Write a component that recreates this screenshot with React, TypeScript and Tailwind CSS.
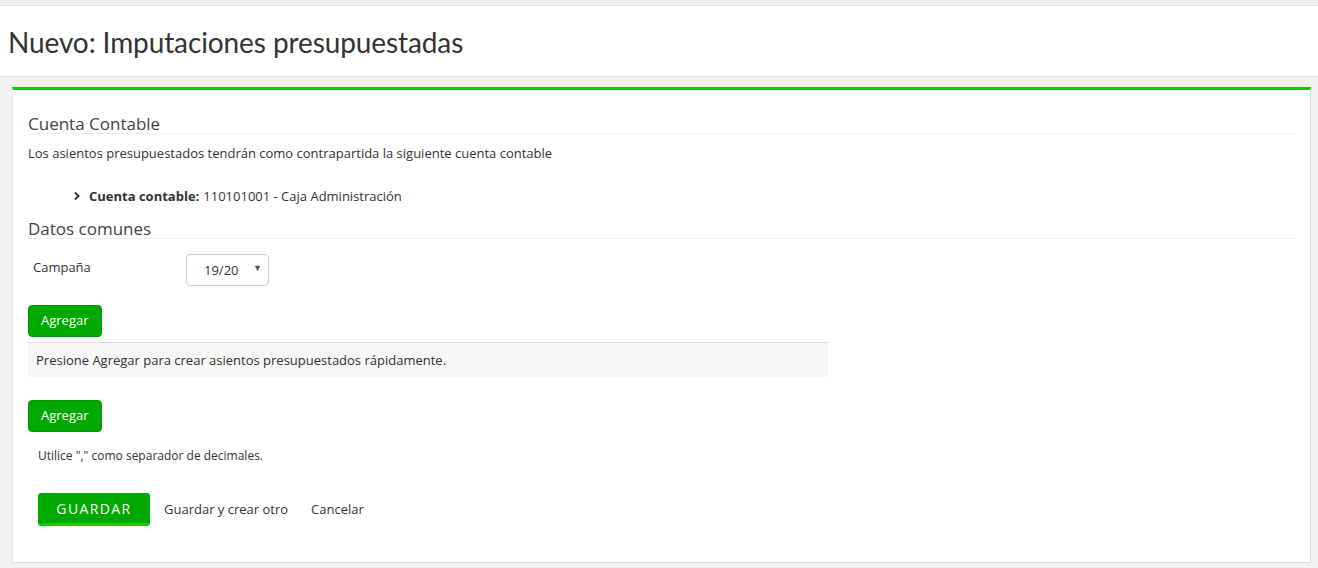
import React from 'react'

function GreenButton({ children }: { children: React.ReactNode }) {
  return (
    <button className="h-[32px] rounded-[4px] border border-[#009a00] bg-[#00a800] px-[12px] text-[13px] text-white">
      {children}
    </button>
  )
}

export default function App() {
  return (
    <div className="min-h-[568px] bg-[#f1f1f1] pt-[5px] font-['Open_Sans',sans-serif] text-[#333]">
      <div className="h-[72px] border-y border-[#e3e3e3] bg-white pl-[8px]">
        <h1 className="pt-[19px] font-['Lato',sans-serif] text-[28px] leading-[34px] tracking-[-0.1px] text-[#333]">
          Nuevo: Imputaciones presupuestadas
        </h1>
      </div>

      <div className="ml-[12px] mr-[7px] mt-[10px] border-t-[3px] border-r border-b border-l border-t-[#00d200] border-r-[#ddd] border-b-[#ddd] border-l-[#e6e6e6] bg-white px-[15px] pb-[36px] pt-[25px]">
        <h2 className="border-b border-[#eee] pb-[1px] text-[17px] leading-[17px] text-[#444]">Cuenta Contable</h2>
        <p className="mt-[10px] text-[13px] leading-[18px]">
          Los asientos presupuestados tendrán como contrapartida la siguiente cuenta contable
        </p>
        <div className="mt-[25px] flex items-center pl-[45px] text-[13px] leading-[18px]">
          <svg width="8" height="10" viewBox="0 0 8 10" className="mr-[8px]">
            <path d="M2 1.5 L5.5 5 L2 8.5" fill="none" stroke="#333" strokeWidth="2" />
          </svg>
          <span className="font-bold">Cuenta contable:</span>
          <span className="ml-[4px]">110101001 - Caja Administración</span>
        </div>

        <h2 className="mt-[15px] border-b border-[#eee] pb-[1px] text-[17px] leading-[17px] text-[#444]">Datos comunes</h2>

        <div className="mt-[15px] flex items-start">
          <span className="ml-[5px] mt-[4px] w-[153px] text-[13px] leading-[18px]">Campaña</span>
          <div className="flex h-[32px] w-[83px] items-center rounded-[4px] border border-[#ccc] bg-white pl-[17px] pr-[6px] text-[13px]">
            <span className="mt-[2px] flex-1">19/20</span>
            <span className="mb-[4px] text-[9px] text-[#555]">▼</span>
          </div>
        </div>

        <div className="mt-[19px]">
          <GreenButton>Agregar</GreenButton>
        </div>

        <div className="mt-[5px] h-[35px] w-[800px] border-t border-[#dcdcdc] bg-[#f7f7f7] pl-[8px] pt-[8px] text-[13px] leading-[18px]">
          Presione Agregar para crear asientos presupuestados rápidamente.
        </div>

        <div className="mt-[23px]">
          <GreenButton>Agregar</GreenButton>
        </div>

        <p className="mt-[15px] pl-[10px] text-[12px] leading-[17px]">Utilice "," como separador de decimales.</p>

        <div className="mt-[29px] flex items-center pl-[10px] text-[13px]">
          <button className="h-[33px] w-[112px] rounded-[3px] border-b-[3px] border-[#00d200] bg-[#00a800] text-[14px] font-medium tracking-[1.4px] text-white">
            GUARDAR
          </button>
          <span className="ml-[14px]">Guardar y crear otro</span>
          <span className="ml-[23px]">Cancelar</span>
        </div>
      </div>
    </div>
  )
}
